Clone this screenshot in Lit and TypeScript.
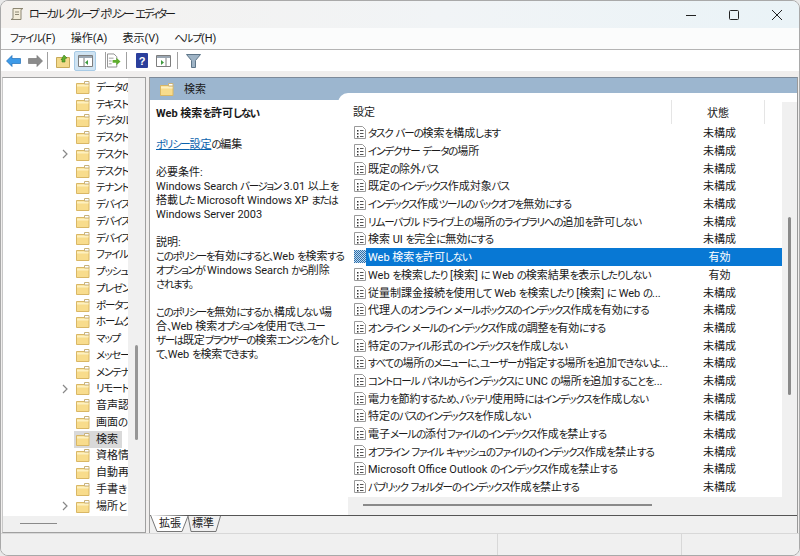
import { LitElement, css, html, svg } from "lit";
import { customElement } from "lit/decorators.js";

const TREE: [string, boolean][] = [
  ["データの", false], ["テキスト", false], ["デジタル", false], ["デスクト", false],
  ["デスクト", true], ["デスクト", false], ["テナント", false], ["デバイス", false],
  ["デバイス", false], ["デバイス", false], ["ファイル", false], ["プッシュ", false],
  ["プレゼン", false], ["ポータブ", false], ["ホームグ", false], ["マップ", false],
  ["メッセー", false], ["メンテナ", false], ["リモート", true], ["音声認", false],
  ["画面の", false], ["検索", false], ["資格情", false], ["自動再", false],
  ["手書き", false], ["場所と", true],
];

const ROWS: [string, string][] = [
  ["タスク バーの検索を構成します", "未構成"],
  ["インデクサー データの場所", "未構成"],
  ["既定の除外パス", "未構成"],
  ["既定のインデックス作成対象パス", "未構成"],
  ["インデックス作成ツールのバックオフを無効にする", "未構成"],
  ["リムーバブル ドライブ上の場所のライブラリへの追加を許可しない", "未構成"],
  ["検索 UI を完全に無効にする", "未構成"],
  ["Web 検索を許可しない", "有効"],
  ["Web を検索したり [検索] に Web の検索結果を表示したりしない", "有効"],
  ["従量制課金接続を使用して Web を検索したり [検索] に Web の...", "未構成"],
  ["代理人のオンライン メールボックスのインデックス作成を有効にする", "未構成"],
  ["オンライン メールのインデックス作成の調整を有効にする", "未構成"],
  ["特定のファイル形式のインデックスを作成しない", "未構成"],
  ["すべての場所のメニューに、ユーザーが指定する場所を追加できないよ...", "未構成"],
  ["コントロール パネルからインデックスに UNC の場所を追加することを...", "未構成"],
  ["電力を節約するため、バッテリ使用時にはインデックスを作成しない", "未構成"],
  ["特定のパスのインデックスを作成しない", "未構成"],
  ["電子メールの添付ファイルのインデックス作成を禁止する", "未構成"],
  ["オフライン ファイル キャッシュのファイルのインデックス作成を禁止する", "未構成"],
  ["Microsoft Office Outlook のインデックス作成を禁止する", "未構成"],
  ["パブリック フォルダーのインデックス作成を禁止する", "未構成"],
];

const DESC: string[][] = [
  ["必要条件:", "Windows Search バージョン 3.01 以上を", "搭載した Microsoft Windows XP または", "Windows Server 2003"],
  ["説明:", "このポリシーを有効にすると、Web を検索する", "オプションが Windows Search から削除", "されます。"],
  ["このポリシーを無効にするか、構成しない場", "合、Web 検索オプションを使用でき、ユー", "ザーは既定ブラウザーの検索エンジンを介し", "て、Web を検索できます。"],
];

const SELECTED = "Web 検索を許可しない";

// the reference font has narrow kana, so kana and kanji runs get their own sizing
const fit = (s: string) =>
  (s.match(/[\u3040-\u30ff、。]+|[\u4e00-\u9fff]+|[^\u3040-\u30ff、。\u4e00-\u9fff]+/g) ?? []).map((run) => {
    if (/^[\u3040-\u30ff、。]/.test(run)) return html`<span class="k">${run}</span>`;
    if (/^[\u4e00-\u9fff]/.test(run)) return html`<span class="h">${run}</span>`;
    return run;
  });

const folder = svg`<svg width="14" height="13" viewBox="0 0 14 13"><path d="M.5 2.500h12.500v10H.5z" fill="#f8dc8c" stroke="#d9b765"/><path d="M1 3.500h11.500v2H1z" fill="#fdf0c0"/><path d="M8.500 .5h4.500v2.500H8.500z" fill="#fff" stroke="#c9b27a"/></svg>`;

const policy = svg`<svg width="12" height="13" viewBox="0 0 12 13"><path d="M.5 .5h8l3 3v9H.5z" fill="#fff" stroke="#9a9a9a"/><path d="M3 4h1.500v1.500H3zM3 7h1.500v1.500H3zM3 10h1.500v1.500H3z" fill="#333"/><path d="M6 4.500h3.500M6 7.500h3.500M6 10.500h3.500" stroke="#555"/></svg>`;

const policyOn = svg`<svg width="12" height="13" viewBox="0 0 12 13"><defs><pattern id="dith" width="2" height="2" patternUnits="userSpaceOnUse"><rect width="2" height="2" fill="#bcd9f2"/><rect width="1" height="1" fill="#2f6ea8"/><rect x="1" y="1" width="1" height="1" fill="#2f6ea8"/></pattern></defs><rect width="12" height="13" fill="url(#dith)"/></svg>`;

@customElement("app-root")
export class AppRoot extends LitElement {
  static styles = css`
    :host {
      display: block;
      width: 800px;
      height: 556px;
      font-family: Roboto, "Noto Sans CJK JP", sans-serif;
      font-size: 11px;
      font-feature-settings: "palt";
      color: #1a1a1a;
      background: #e9e9e9;
    }
    .k { font-size: 10.5px; letter-spacing: -1.1px; line-height: 0; }
    .h { font-size: 11px; line-height: 0; }
    .win {
      box-sizing: border-box;
      height: 556px;
      display: flex;
      flex-direction: column;
      border: 1px solid #a9a9a9;
      border-radius: 8px;
      background: #f0eeed;
      overflow: hidden;
    }
    .title {
      height: 27px;
      flex: none;
      display: flex;
      align-items: center;
      background: linear-gradient(90deg, #f4f1ee, #f1f4f6 55%, #eaf3f7);
      padding-left: 8px;
    }
    .title .name { margin-left: 4px; }
    .title .name .k { font-size: 11px; letter-spacing: -2.1px; }
    .title .caps { margin-left: auto; display: flex; margin-right: 17px; }
    .caps svg { display: block; margin-left: 33px; }
    .menu {
      height: 21px;
      flex: none;
      display: flex;
      gap: 15px;
      align-items: center;
      padding-left: 9px;
      background: #fbfcfc;
      border-bottom: 1px solid #b4b4b4;
    }
    .tools {
      height: 21px;
      flex: none;
      display: flex;
      align-items: center;
      padding-left: 1px;
      background: #fff;
    }
    .tb { width: 22px; height: 20px; flex: none; display: flex; align-items: center; justify-content: center; box-sizing: border-box; }
    .tb.w14 { width: 14px; }
    .tb.w20 { width: 20px; }
    .tb.on { background: #cfe3f2; border: 1px solid #a8cbe6; border-radius: 2px; }
    .sep { width: 1px; height: 17px; flex: none; background: #a0a0a0; }
    .sa { margin: 0 4px 0 1px; }
    .sb { margin: 0 1px 0 9px; }
    .sc { margin: 0 4px 0 5px; }
    .sd { margin: 0 4px 0 4px; }
    .main { flex: 1; min-height: 0; display: flex; gap: 3px; padding: 6px 1px 0 1px; }
    .tree {
      width: 144px;
      flex: none;
      box-sizing: border-box;
      display: flex;
      border: 1px solid #a0a0a0;
      border-left-color: #c8c8c8;
      background: #f0f0f0;
      position: relative;
      overflow: hidden;
    }
    .tree-body {
      width: 125px;
      height: 438px;
      flex: none;
      background: #fff;
      padding-top: 1px;
      box-sizing: border-box;
      overflow: hidden;
    }
    .tn {
      height: 16.75px;
      display: flex;
      align-items: center;
      white-space: nowrap;
      overflow: hidden;
    }
    .chev { width: 12px; margin-left: 56px; flex: none; display: flex; justify-content: center; }
    .tn .ico { display: flex; margin-left: 5px; }
    .tn .lab { margin-left: 6px; }
    .tn.sel { background: linear-gradient(90deg, #fff 71px, #d9d9d9 71px, #d9d9d9 119px, #fff 119px); }
    .tv { width: 3px; height: 95px; margin: 267px 0 0 7px; background: #969696; border-radius: 2px; flex: none; }
    .th { position: absolute; left: 17px; bottom: 8px; width: 37px; height: 1px; background: #8a8a8a; }
    .pane {
      flex: 1;
      min-width: 0;
      display: flex;
      flex-direction: column;
      background: #fff;
      border-top: 1px solid #7d8a99;
      border-left: 1px solid #a0a0a0;
      border-right: 1px solid #9a9a9a;
    }
    .head {
      height: 22px;
      flex: none;
      box-sizing: border-box;
      display: flex;
      align-items: center;
      gap: 10px;
      padding-left: 10px;
      background: #9cb6cf;
    }
    .body { flex: 1; display: flex; min-height: 0; }
    .desc {
      width: 188px;
      flex: none;
      box-sizing: border-box;
      padding: 7px 0 0 6px;
      line-height: 14px;
      white-space: nowrap;
      position: relative;
      z-index: 1;
    }
    .desc .k { letter-spacing: -1.35px; }
    .desc p { margin: 0 0 14px; }
    .desc p.ttl { margin-bottom: 17px; font-weight: 700; }
    .desc a { color: #0a62ad; text-decoration: underline; }
    .list {
      flex: 1;
      min-width: 0;
      margin-top: -7px;
      background: #fff;
      border-radius: 10px 0 0 0;
      display: flex;
    }
    .cols { width: 444px; flex: none; padding-top: 7px; box-sizing: border-box; display: flex; flex-direction: column; }
    .hdr { height: 24px; flex: none; display: flex; align-items: center; }
    .hdr .a { width: 334px; box-sizing: border-box; padding: 2px 0 0 15px; height: 100%; display: flex; align-items: center; border-right: 1px solid #e5e5e5; }
    .hdr .b { width: 93px; box-sizing: border-box; padding-top: 2px; text-align: center; border-right: 1px solid #e5e5e5; height: 100%; line-height: 24px; }
    .row { height: 17.7px; flex: none; display: flex; align-items: center; padding-left: 16px; white-space: nowrap; }
    .row svg { flex: none; }
    .rest { flex: 1; min-width: 0; display: flex; align-items: center; height: 100%; }
    .row.sel .rest { background: #0878d4; color: #fff; }
    .row .t { width: 307px; padding: 2px 0 0 2px; box-sizing: border-box; overflow: hidden; }
    .row .s { width: 93px; padding-top: 2px; text-align: center; }
    .hscroll { flex: 1; margin: 2px 0 0 10px; background: #f0f0f0; position: relative; }
    .hscroll i { position: absolute; left: 15px; top: 7px; width: 289px; height: 2px; background: #8a8a8a; }
    .vbar { width: 15px; flex: none; background: #f0f0f0; margin-top: 9px; display: flex; justify-content: center; }
    .vbar i { width: 3px; height: 178px; margin-top: 115px; background: #8a8a8a; border-radius: 2px; display: block; }
    .tabs { height: 17px; flex: none; display: flex; background: #f0f0f0; border-top: 1px solid #555; }
    .tab {
      height: 17px;
      margin-top: -1px;
      line-height: 17px;
      box-sizing: border-box;
    }
    .tab.on {
      width: 38px;
      padding-left: 9px;
      background: url("data:image/svg+xml,%3Csvg xmlns='http://www.w3.org/2000/svg' width='38' height='17'%3E%3Cpath d='M.5 0L7 16.500H32L38 1' fill='%23fff' stroke='%23777'/%3E%3C/svg%3E");
    }
    .tab.off {
      width: 33px;
      padding-left: 4px;
      background: url("data:image/svg+xml,%3Csvg xmlns='http://www.w3.org/2000/svg' width='33' height='17'%3E%3Cpath d='M0 1L3 16.500H28L32.500 1' fill='none' stroke='%23777'/%3E%3C/svg%3E");
    }
    .status { height: 21px; flex: none; border-top: 1px solid #d8d8d8; background: #f0f0f0; display: flex; }
    .status div { border-right: 1px solid #d8d8d8; }
    .status .c1 { width: 496px; }
    .status .c2 { width: 183px; }
  `;

  render() {
    return html`
      <div class="win">
        <div class="title">
          <svg width="16" height="16" viewBox="0 0 16 16"><path d="M4 1.500h10l-2 1v10H2l2-1z" fill="#f3ecd9" stroke="#8c8672"/><path d="M6 5h4M6 7.500h4" stroke="#8c8672"/></svg>
          <span class="name">${fit("ローカル グループ ポリシー エディター")}</span>
          <div class="caps">
            <svg width="10" height="10" viewBox="0 0 10 10"><path d="M0 5.500h10" stroke="#222"/></svg>
            <svg width="10" height="10" viewBox="0 0 10 10"><rect x=".5" y=".5" width="9" height="9" rx="1" fill="none" stroke="#222"/></svg>
            <svg width="10" height="10" viewBox="0 0 10 10"><path d="M0 0l10 10M10 0L0 10" stroke="#222"/></svg>
          </div>
        </div>
        <div class="menu">
          ${["ファイル(F)", "操作(A)", "表示(V)", "ヘルプ(H)"].map((m) => html`<span>${fit(m)}</span>`)}
        </div>
        <div class="tools">
          <div class="tb"><svg width="15" height="12" viewBox="0 0 15 12"><path d="M.5 6L6 .5v3h8.500v5H6v3z" fill="#3d9ae8" stroke="#1f6fb8" stroke-width=".7"/></svg></div>
          <div class="tb"><svg width="15" height="12" viewBox="0 0 15 12"><path d="M14.500 6L9 .5v3H.5v5H9v3z" fill="#8b8b8b" stroke="#777" stroke-width=".7"/></svg></div>
          <div class="sep sa"></div>
          <div class="tb"><svg width="14" height="15" viewBox="0 0 14 15"><path d="M.5 4.500h13v10H.5z" fill="#f3d98a" stroke="#c7a95a"/><path d="M5 7l3-5 3 3-2 .5V9H6V6z" fill="#5fae2e" stroke="#3c7d1b" stroke-width=".6"/></svg></div>
          <div class="tb on"><svg width="15" height="12" viewBox="0 0 15 12"><path d="M.5 .5h14v11H.5z" fill="#fff" stroke="#7d7d7d"/><path d="M1 1h13v2H1z" fill="#9aa6b2"/><path d="M6 3v8" stroke="#7d7d7d"/><path d="M10 5v5l-3-2.500z" fill="#3d9a3d"/></svg></div>
          <div class="sep sb"></div>
          <div class="tb w14"><svg width="15" height="15" viewBox="0 0 15 15"><path d="M.5 .5h7l3 3v11H.5z" fill="#fff" stroke="#8a8a8a"/><path d="M2 5h5M2 8h3M2 11h3" stroke="#9a9a9a"/><path d="M6 7h4V4.500L14.500 8.500 10 12.500V10H6z" fill="#5fae2e"/></svg></div>
          <div class="sep sc"></div>
          <div class="tb"><svg width="12" height="15" viewBox="0 0 12 15"><rect width="12" height="15" rx="1" fill="#2b3f9c"/><text x="6" y="12" text-anchor="middle" font-size="11" font-weight="700" font-family="Liberation Sans" fill="#fff">?</text></svg></div>
          <div class="tb w20"><svg width="15" height="12" viewBox="0 0 15 12"><path d="M.5 .5h14v11H.5z" fill="#fff" stroke="#7d7d7d"/><path d="M1 1h13v2H1z" fill="#9aa6b2"/><path d="M10 3v8" stroke="#7d7d7d"/><path d="M5 5v5l3-2.500z" fill="#3d9a3d"/></svg></div>
          <div class="sep sd"></div>
          <div class="tb"><svg width="15" height="14" viewBox="0 0 15 14"><path d="M.5 .5h14L9.500 6.500v7h-4v-7z" fill="#9fb4c6" stroke="#5f7689"/></svg></div>
        </div>
        <div class="main">
          <div class="tree">
            <div class="tree-body">
              ${TREE.map(([t, more]) => html`
                <div class="tn ${t === "検索" ? "sel" : ""}">
                  <span class="chev">${more ? html`<svg width="6" height="10" viewBox="0 0 6 10"><path d="M1 1l4 4-4 4" fill="none" stroke="#888" stroke-width="1.200"/></svg>` : ""}</span>
                  <span class="ico">${folder}</span>
                  <span class="lab">${fit(t)}</span>
                </div>`)}
            </div>
            <i class="tv"></i>
            <i class="th"></i>
          </div>
          <div class="pane">
            <div class="head">${folder}<span>${fit("検索")}</span></div>
            <div class="body">
              <div class="desc">
                <p class="ttl">${fit(SELECTED)}</p>
                <p><a>${fit("ポリシー設定")}</a>${fit("の編集")}</p>
                ${DESC.map((lines) => html`<p>${lines.map((l, i) => html`${i ? html`<br>` : ""}${fit(l)}`)}</p>`)}
              </div>
              <div class="list">
                <div class="cols">
                  <div class="hdr"><div class="a">${fit("設定")}</div><div class="b">${fit("状態")}</div></div>
                  ${ROWS.map(([t, s]) => html`
                    <div class="row ${t === SELECTED ? "sel" : ""}">
                      ${t === SELECTED ? policyOn : policy}
                      <div class="rest"><span class="t">${fit(t)}</span><span class="s">${fit(s)}</span></div>
                    </div>`)}
                  <div class="hscroll"><i></i></div>
                </div>
                <div class="vbar"><i></i></div>
              </div>
            </div>
            <div class="tabs"><span class="tab on">${fit("拡張")}</span><span class="tab off">${fit("標準")}</span></div>
          </div>
        </div>
        <div class="status"><div class="c1"></div><div class="c2"></div></div>
      </div>
    `;
  }
}
